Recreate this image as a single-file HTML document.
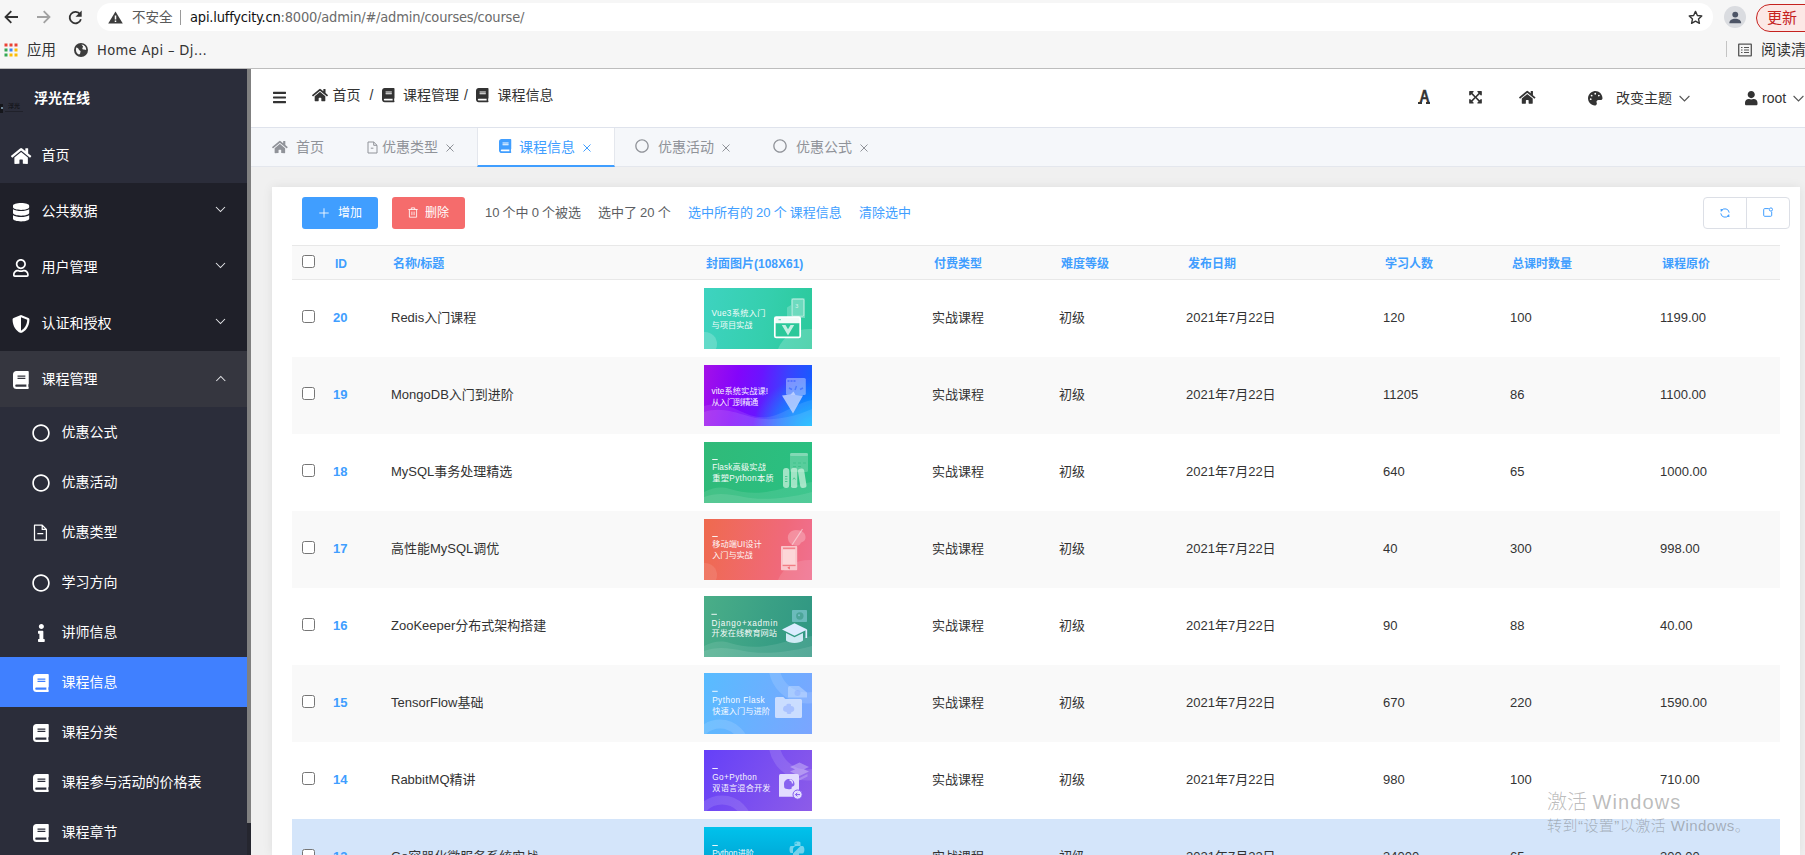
<!DOCTYPE html>
<html lang="zh-CN">
<head>
<meta charset="utf-8">
<title>浮光在线</title>
<style>
*{box-sizing:border-box;margin:0;padding:0}
html,body{width:1805px;height:855px;overflow:hidden;background:#f0f0f0}
body{font-family:"Liberation Sans","Noto Sans CJK SC",sans-serif;font-size:14px;color:#333;position:relative}
svg{display:block;overflow:visible}
.abs{position:absolute}
i,em,u,b,a{font-style:normal;text-decoration:none}
/* ---------- browser chrome ---------- */
#chrome{position:absolute;left:0;top:0;width:1805px;height:69px;background:#f6f6f6;border-bottom:1px solid #bdbdbd;font-family:"DejaVu Sans","Noto Sans CJK SC",sans-serif;color:#333}
#omni{position:absolute;left:97px;top:3px;width:1616px;height:28px;border-radius:14px;background:#fff}
#chrome span{position:absolute;white-space:nowrap}
/* ---------- sidebar ---------- */
#side{position:absolute;left:0;top:69px;width:247px;height:786px;background:#2b2d3a;color:#fff;overflow:hidden}
#sbar{position:absolute;left:247px;top:69px;width:4px;height:786px;background:#25262f}
#sbar i{position:absolute;left:0;top:0;width:4px;height:754px;background:#808080}
.logo{position:absolute;left:0;top:0;width:247px;height:58px}
.logo b{position:absolute;left:34px;top:19px;line-height:20px;font-size:14px;font-weight:700}
.logo em{position:absolute;left:8px;top:33.300px;font-size:6px;line-height:8px;color:#16171d;font-weight:700}
.logo i{position:absolute;display:block}
.mi{position:absolute;left:0;width:247px;height:56px;line-height:56px;font-size:14px}
.mi.dk{background:#1f2029}
.mi.op{background:#35363f}
.mi span{position:absolute;left:41.500px;top:0;white-space:nowrap}
.mi svg.ic{position:absolute}
.mi svg.ar{position:absolute;left:215px;top:22.200px}
.si{position:absolute;left:0;width:247px;height:50px;line-height:50px;font-size:14px}
.si span{position:absolute;left:61.500px;top:0;white-space:nowrap}
.si svg{position:absolute}
.si.act{background:#4080ff}
/* ---------- header ---------- */
#head{position:absolute;left:251px;top:69px;width:1554px;height:59px;background:#fff;border-bottom:1px solid #dfe3ec}
.bc{position:absolute;top:16px;line-height:20px;font-size:14px;color:#333;white-space:nowrap}
.hr{position:absolute;top:19px;line-height:20px;font-size:14px;color:#333;white-space:nowrap}
.fa-a{position:absolute;left:1166.500px;top:16.800px;width:13px;text-align:center;font-family:"Liberation Sans",sans-serif;font-weight:700;font-size:16px;line-height:22px;color:#333;transform:scaleX(.87);transform-origin:50% 50%;-webkit-text-stroke:.350px #333}
.fa-f{position:absolute;top:33.200px;height:1.700px;background:#333;border-radius:.3px}
#tabs{position:absolute;left:251px;top:128px;width:1554px;height:39px;background:#f5f7fa;border-bottom:1px solid #e4e7ed}
.tab{position:absolute;top:0;height:39px;line-height:38px;color:#909399;font-size:14px;white-space:nowrap}
.tabact{position:absolute;left:226px;top:0;width:138px;height:39px;background:#fff;border-left:1px solid #e4e7ed;border-right:1px solid #e4e7ed;border-bottom:2px solid #409eff}
#main{position:absolute;left:251px;top:167px;width:1554px;height:688px;background:#f0f0f0}
#card{position:absolute;left:272px;top:187px;width:1528px;height:668px;background:#fff;overflow:hidden;box-shadow:0 0 10px rgba(0,0,0,.08)}
.btn{position:absolute;top:10px;height:32px;border-radius:3px;color:#fff;font-size:12px;line-height:32px}
.btn svg{position:absolute}
.btn span{position:absolute;top:0;white-space:nowrap}
.btn.add{left:30px;width:76px;background:#409eff}
.btn.add svg{left:17px;top:11px}
.btn.add span{left:36px}
.btn.del{left:120px;width:73px;background:#f56c6c}
.btn.del svg{left:16.200px;top:9.700px}
.btn.del span{left:33px}
.tt{position:absolute;top:16px;line-height:20px;font-size:13px;color:#5c5e62;white-space:nowrap;word-spacing:-0.500px}
.tt.bl{color:#409eff}
.bg2{position:absolute;left:1431px;top:10px;width:87px;height:32px;border:1px solid #dcdfe6;border-radius:4px;background:#fff}
.bg2 i{position:absolute;left:42px;top:0;width:1px;height:30px;background:#dcdfe6}
.th{position:absolute;left:20px;top:58px;width:1488px;height:35px;background:#f9f9f9;border-top:1px solid #e8e8e8;border-bottom:1px solid #e8e8e8}
.th b{position:absolute;top:8px;line-height:20px;font-size:12px;font-weight:700;color:#409eff;white-space:nowrap}
.cb{position:absolute;width:13px;height:13px;border:1px solid #767676;border-radius:2.5px;background:#fff}
.tr{position:absolute;left:20px;width:1488px;height:77px;background:#fff;font-size:13px}
.tr.odd{background:#f9f9f9}
.tr.sel{background:#d4e5fa}
.tr span{position:absolute;top:28px;line-height:20px;white-space:nowrap;color:#333}
.tr a{position:absolute;top:28px;line-height:20px;font-weight:700;color:#409eff}
.tm{position:absolute;left:412px;top:8px;width:108px;height:61px;overflow:hidden}
.tm p{position:absolute;left:8px;top:21px;font-size:8px;line-height:11px;color:#fff;white-space:nowrap;opacity:.92}
.tm u{position:absolute;left:8px;top:17px;width:4px;height:1px;background:#fff;opacity:.9}
.tm svg{position:absolute;left:0;top:0}
.t1{background:linear-gradient(100deg,#3ed3c0,#35cfae 55%,#2bc99b)}
.t2{background:radial-gradient(ellipse 55% 85% at 100% 105%,rgba(0,185,255,1) 0%,rgba(0,185,255,0) 100%),linear-gradient(100deg,#a411e8 0%,#8305fb 30%,#6a14ff 50%,#3a42ff 72%,#0d63ff 100%)}
.t3{background:linear-gradient(100deg,#30ba79,#29c082)}
.t4{background:linear-gradient(100deg,#ef6a4e,#f0697a 70%,#f07090)}
.t5{background:linear-gradient(105deg,#4aae88,#3aa085 55%,#2f9682)}
.t6{background:linear-gradient(110deg,#58bcff,#7ba5ff)}
.t7{background:linear-gradient(120deg,#6540f8,#8d5ce8)}
.t8{background:linear-gradient(180deg,#00c2ec,#0092c4)}
#wm{position:absolute;left:1547px;top:788px;color:rgba(105,105,105,.45);white-space:nowrap;font-weight:300}
#wm .w1{font-size:20px;line-height:28px}
#wm .w1 em{letter-spacing:1.100px}
#wm .w2{font-size:15px;line-height:20px;margin-top:0;letter-spacing:.460px}
</style>
</head>
<body>
<div id="chrome"><div id="omni"></div>
<svg class="abs" style="left:4px;top:9.5px" width="15" height="14" viewBox="0 0 15 14"><path d="M14 7H1.5M7.300 1.200L1.500 7l5.800 5.800" fill="none" stroke="#333" stroke-width="1.800"/></svg>
<svg class="abs" style="left:36px;top:9.5px" width="15" height="14" viewBox="0 0 15 14"><path d="M1 7h12.500M7.700 1.200L13.500 7l-5.800 5.800" fill="none" stroke="#a2a2a2" stroke-width="1.800"/></svg>
<svg class="abs" style="left:68px;top:9.500px" width="15" height="15" viewBox="0 0 15 15"><path d="M12.100 4.300A5.700 5.700 0 1 0 12.900 9.200" fill="none" stroke="#333" stroke-width="1.800"/><path d="M13.700 0.500v6.200H7.500z" fill="#333"/></svg>
<svg class="abs" style="left:107.500px;top:11.300px" width="15" height="13" viewBox="0 0 14 12"><path d="M7 0.300L13.800 11.500H0.200z" fill="#3c3c3c"/><path d="M6.300 4.200h1.400v3.700H6.300zM6.300 8.800h1.400v1.400H6.300z" fill="#fff"/></svg>
<span style="left:132px;top:7px;font-size:13.500px;line-height:20px;color:#5a5a5a">不安全</span>
<i class="abs" style="left:180px;top:10px;width:1px;height:15px;background:#9a9a9a"></i>
<span style="left:190px;top:6.700px;font-size:14.500px;font-stretch:condensed;line-height:20px;color:#111;letter-spacing:-0.200px">api.luffycity.cn<em style="color:#6b6b6b">:8000/admin/#/admin/courses/course/</em></span>
<svg class="abs" style="left:1687.500px;top:9.500px" width="15" height="15" viewBox="0 0 14 14"><path d="M7 1.300l1.750 3.800 4.100.45-3.050 2.800.85 4.050L7 10.350 3.350 12.400l.85-4.050L1.150 5.550l4.100-.45z" fill="none" stroke="#333" stroke-width="1.300" stroke-linejoin="round"/></svg>
<i class="abs" style="left:1724px;top:6px;width:22px;height:22px;border-radius:11px;background:#dadce0"></i>
<svg class="abs" style="left:1728.800px;top:10.800px" width="12.500" height="13" viewBox="0 0 12 12"><circle cx="6" cy="3.200" r="2.800" fill="#4d5566"/><path d="M0.300 11.500c0-3 2.600-4.400 5.700-4.400s5.700 1.400 5.700 4.400z" fill="#4d5566"/></svg>
<div class="abs" style="left:1756px;top:3.500px;width:70px;height:28px;border:1px solid #c5221f;border-radius:14px;background:#fce8e6"></div>
<span style="left:1767px;top:7.200px;font-size:15px;line-height:22px;color:#c5221f">更新</span>
<!-- bookmarks bar -->
<svg class="abs" style="left:4px;top:43px" width="14" height="14" viewBox="0 0 14 14"><g><rect x="0.500" y="0.500" width="3" height="3" fill="#ea4335"/><rect x="5.500" y="0.500" width="3" height="3" fill="#ea4335"/><rect x="10.500" y="0.500" width="3" height="3" fill="#ea4335"/><rect x="0.500" y="5.500" width="3" height="3" fill="#34a853"/><rect x="5.500" y="5.500" width="3" height="3" fill="#4285f4"/><rect x="10.500" y="5.500" width="3" height="3" fill="#fbbc04"/><rect x="0.500" y="10.500" width="3" height="3" fill="#34a853"/><rect x="5.500" y="10.500" width="3" height="3" fill="#fbbc04"/><rect x="10.500" y="10.500" width="3" height="3" fill="#fbbc04"/></g></svg>
<span style="left:27px;top:39px;font-size:14.400px;line-height:22px;color:#333">应用</span>
<svg class="abs" style="left:74px;top:43px" width="14" height="14" viewBox="0 0 14 14"><circle cx="7" cy="7" r="7" fill="#3c3c3c"/><path d="M2.200 4.500c1.500.2 2.300 1 2.600 2 .3 1 1.400.8 1.700 1.700.3 1-.6 1.600-.4 2.700l-1.300.6C2.600 10.400 1.300 8 2.200 4.500zM7.500 1.600c.2 1 1.300 1.100 1.500 2 .2.900-1 1.400-.6 2.300.5 1 2.400.4 3.700 1.200.4-2.600-1.600-5.300-4.600-5.500z" fill="#f6f6f6"/></svg>
<span style="left:97px;top:39px;font-size:14.500px;font-stretch:condensed;line-height:22px;color:#333;letter-spacing:0.360px">Home Api – Dj…</span>
<i class="abs" style="left:1726px;top:41px;width:1px;height:16px;background:#c4c4c4"></i>
<svg class="abs" style="left:1738px;top:43px" width="14" height="14" viewBox="0 0 14 13"><rect x="0.700" y="0.700" width="12.600" height="11.600" rx="0.300" fill="none" stroke="#555" stroke-width="1.300"/><path d="M3 4h1.500M6 4h5M3 6.500h1.500M6 6.500h5M3 9h1.500M6 9h5" stroke="#555" stroke-width="1.200"/></svg>
<span style="left:1761px;top:39px;font-size:15px;line-height:22px;color:#333">阅读清单</span>
</div>
<div id="side">
<div class="logo"><i style="left:0;top:34.500px;width:3.300px;height:9px;background:#15161b"></i><i style="left:.8px;top:37.500px;width:2px;height:2.300px;background:#6f8798"></i><i style="left:5px;top:41.800px;width:18px;height:1px;background:#20212a"></i><em>浮光</em><b>浮光在线</b></div>
<div class="mi " style="top:58px"><svg class="ic" style="left:10.88px;top:20.20px" width="20.25" height="18" viewBox="0 0 576 512" preserveAspectRatio="xMidYMid meet"><path fill="#fff" d="M280.37 148.26L96 300.11V464a16 16 0 0 0 16 16l112.06-.29a16 16 0 0 0 15.92-16V368a16 16 0 0 1 16-16h64a16 16 0 0 1 16 16v95.64a16 16 0 0 0 16 16.05L464 480a16 16 0 0 0 16-16V300L295.67 148.26a12.19 12.19 0 0 0-15.3 0zM571.6 251.47L488 182.56V44.05a12 12 0 0 0-12-12h-56a12 12 0 0 0-12 12v72.61L318.47 43a48 48 0 0 0-61 0L4.34 251.47a12 12 0 0 0-1.6 16.9l25.5 31A12 12 0 0 0 45.15 301l235.22-193.74a12.19 12.19 0 0 1 15.3 0L530.9 301a12 12 0 0 0 16.9-1.6l25.5-31a12 12 0 0 0-1.7-16.93z"/></svg><span>首页</span></div>
<div class="mi dk" style="top:114px"><svg class="ic" style="left:12.90px;top:19.95px" width="16.2" height="18.5" viewBox="0 0 448 512" preserveAspectRatio="xMidYMid meet"><path fill="#fff" d="M448 73.143v45.714C448 159.143 347.667 192 224 192S0 159.143 0 118.857V73.143C0 32.857 100.333 0 224 0s224 32.857 224 73.143zM448 176v102.857C448 319.143 347.667 352 224 352S0 319.143 0 278.857V176c48.125 33.143 136.208 48.572 224 48.572S399.874 209.143 448 176zm0 160v102.857C448 479.143 347.667 512 224 512S0 479.143 0 438.857V336c48.125 33.143 136.208 48.572 224 48.572S399.874 369.143 448 336z"/></svg><span>公共数据</span><svg class="ar" width="11" height="9" viewBox="0 0 11 9"><path d="M1 2 L5.500 6.500 L10 2" fill="none" stroke="#e6e7ea" stroke-width="1.050"/></svg></div>
<div class="mi dk" style="top:170px"><svg class="ic" style="left:13.12px;top:20.20px" width="15.75" height="18" viewBox="0 0 448 512" preserveAspectRatio="xMidYMid meet"><path fill="#fff" d="M313.6 304c-28.7 0-42.5 16-89.6 16-47.1 0-60.8-16-89.6-16C60.2 304 0 364.2 0 438.4V464c0 26.5 21.5 48 48 48h352c26.5 0 48-21.5 48-48v-25.6c0-74.2-60.2-134.4-134.4-134.4zM400 464H48v-25.6c0-47.6 38.800-86.400 86.400-86.400 14.600 0 38.300 16 89.600 16 51.700 0 74.900-16 89.600-16 47.600 0 86.400 38.800 86.400 86.400V464zM224 288c79.500 0 144-64.500 144-144S303.500 0 224 0 80 64.500 80 144s64.500 144 144 144zm0-240c52.900 0 96 43.100 96 96s-43.100 96-96 96-96-43.100-96-96 43.100-96 96-96z"/></svg><span>用户管理</span><svg class="ar" width="11" height="9" viewBox="0 0 11 9"><path d="M1 2 L5.500 6.500 L10 2" fill="none" stroke="#e6e7ea" stroke-width="1.050"/></svg></div>
<div class="mi dk" style="top:226px"><svg class="ic" style="left:12.00px;top:20.20px" width="18" height="18" viewBox="0 0 512 512" preserveAspectRatio="xMidYMid meet"><path fill="#fff" d="M466.5 83.7l-192-80a48.150 48.150 0 0 0-36.900 0l-192 80C27.700 91.100 16 108.600 16 128c0 198.500 114.500 335.700 221.500 380.300 11.800 4.900 25.100 4.900 36.900 0C360.100 472.600 496 349.300 496 128c0-19.400-11.700-36.900-29.500-44.300zM256.100 446.300l-.1-381 175.900 73.300c-3.300 151.400-82.100 261.100-175.800 307.700z"/></svg><span>认证和授权</span><svg class="ar" width="11" height="9" viewBox="0 0 11 9"><path d="M1 2 L5.500 6.500 L10 2" fill="none" stroke="#e6e7ea" stroke-width="1.050"/></svg></div>
<div class="mi op" style="top:282px"><svg class="ic" style="left:13.12px;top:20.20px" width="15.75" height="18" viewBox="0 0 448 512" preserveAspectRatio="xMidYMid meet"><path fill="#fff" d="M448 360V24c0-13.300-10.700-24-24-24H96C43 0 0 43 0 96v320c0 53 43 96 96 96h328c13.300 0 24-10.700 24-24v-16c0-7.500-3.500-14.300-8.900-18.700-4.200-15.400-4.200-59.300 0-74.700 5.400-4.300 8.900-11.100 8.900-18.600zM128 134c0-3.300 2.700-6 6-6h212c3.300 0 6 2.700 6 6v20c0 3.300-2.700 6-6 6H134c-3.300 0-6-2.700-6-6v-20zm0 64c0-3.300 2.700-6 6-6h212c3.300 0 6 2.700 6 6v20c0 3.300-2.700 6-6 6H134c-3.300 0-6-2.700-6-6v-20zm253.400 250H96c-17.700 0-32-14.300-32-32 0-17.600 14.400-32 32-32h285.400c-1.900 17.100-1.900 46.900 0 64z"/></svg><span>课程管理</span><svg class="ar" width="11" height="9" viewBox="0 0 11 9"><path d="M1.3 8 L5.8 3.500 L10.300 8" fill="none" stroke="#e6e7ea" stroke-width="1.050"/></svg></div>
<div class="si" style="top:338px"><svg class="ic" style="left:32.00px;top:16.50px" width="18" height="18" viewBox="0 0 512 512" preserveAspectRatio="xMidYMid meet"><path fill="#fff" d="M256 8C119 8 8 119 8 256s111 248 248 248 248-111 248-248S393 8 256 8zm0 448c-110.500 0-200-89.500-200-200S145.500 56 256 56s200 89.500 200 200-89.500 200-200 200z"/></svg><span>优惠公式</span></div>
<div class="si" style="top:388px"><svg class="ic" style="left:32.00px;top:16.50px" width="18" height="18" viewBox="0 0 512 512" preserveAspectRatio="xMidYMid meet"><path fill="#fff" d="M256 8C119 8 8 119 8 256s111 248 248 248 248-111 248-248S393 8 256 8zm0 448c-110.500 0-200-89.500-200-200S145.500 56 256 56s200 89.500 200 200-89.500 200-200 200z"/></svg><span>优惠活动</span></div>
<div class="si" style="top:438px"><svg class="ic" style="left:33px;top:16.5px" width="15" height="17" viewBox="0 0 15 17"><path d="M1.500 1.200h7.700l4.200 4.200v10.700H1.500z M9.200 1.200v4.200h4.200 M4.300 9.500h6" fill="none" stroke="#fff" stroke-width="1.250" stroke-linejoin="round"/></svg><span>优惠类型</span></div>
<div class="si" style="top:488px"><svg class="ic" style="left:32.00px;top:16.50px" width="18" height="18" viewBox="0 0 512 512" preserveAspectRatio="xMidYMid meet"><path fill="#fff" d="M256 8C119 8 8 119 8 256s111 248 248 248 248-111 248-248S393 8 256 8zm0 448c-110.500 0-200-89.500-200-200S145.500 56 256 56s200 89.500 200 200-89.500 200-200 200z"/></svg><span>学习方向</span></div>
<div class="si" style="top:538px"><svg class="ic" style="left:37.62px;top:16.50px" width="6.75" height="18" viewBox="0 0 192 512" preserveAspectRatio="xMidYMid meet"><path fill="#fff" d="M20 424.229h20V279.771H20c-11.046 0-20-8.954-20-20V212c0-11.046 8.954-20 20-20h112c11.046 0 20 8.954 20 20v212.229h20c11.046 0 20 8.954 20 20V492c0 11.046-8.954 20-20 20H20c-11.046 0-20-8.954-20-20v-47.771c0-11.046 8.954-20 20-20zM96 0C56.235 0 24 32.235 24 72s32.235 72 72 72 72-32.235 72-72S135.764 0 96 0z"/></svg><span>讲师信息</span></div>
<div class="si act" style="top:588px"><svg class="ic" style="left:33.12px;top:16.50px" width="15.75" height="18" viewBox="0 0 448 512" preserveAspectRatio="xMidYMid meet"><path fill="#fff" d="M448 360V24c0-13.300-10.700-24-24-24H96C43 0 0 43 0 96v320c0 53 43 96 96 96h328c13.300 0 24-10.700 24-24v-16c0-7.500-3.500-14.300-8.900-18.700-4.200-15.400-4.200-59.300 0-74.700 5.400-4.300 8.900-11.100 8.900-18.600zM128 134c0-3.300 2.700-6 6-6h212c3.300 0 6 2.700 6 6v20c0 3.300-2.700 6-6 6H134c-3.300 0-6-2.700-6-6v-20zm0 64c0-3.300 2.700-6 6-6h212c3.300 0 6 2.700 6 6v20c0 3.300-2.700 6-6 6H134c-3.300 0-6-2.700-6-6v-20zm253.400 250H96c-17.700 0-32-14.300-32-32 0-17.600 14.400-32 32-32h285.400c-1.900 17.100-1.900 46.900 0 64z"/></svg><span>课程信息</span></div>
<div class="si" style="top:638px"><svg class="ic" style="left:33.12px;top:16.50px" width="15.75" height="18" viewBox="0 0 448 512" preserveAspectRatio="xMidYMid meet"><path fill="#fff" d="M448 360V24c0-13.300-10.700-24-24-24H96C43 0 0 43 0 96v320c0 53 43 96 96 96h328c13.300 0 24-10.700 24-24v-16c0-7.500-3.500-14.300-8.900-18.700-4.200-15.400-4.200-59.300 0-74.700 5.400-4.300 8.900-11.100 8.900-18.600zM128 134c0-3.300 2.700-6 6-6h212c3.300 0 6 2.700 6 6v20c0 3.300-2.700 6-6 6H134c-3.300 0-6-2.700-6-6v-20zm0 64c0-3.300 2.700-6 6-6h212c3.300 0 6 2.700 6 6v20c0 3.300-2.700 6-6 6H134c-3.300 0-6-2.700-6-6v-20zm253.400 250H96c-17.700 0-32-14.300-32-32 0-17.600 14.400-32 32-32h285.400c-1.900 17.100-1.900 46.900 0 64z"/></svg><span>课程分类</span></div>
<div class="si" style="top:688px"><svg class="ic" style="left:33.12px;top:16.50px" width="15.75" height="18" viewBox="0 0 448 512" preserveAspectRatio="xMidYMid meet"><path fill="#fff" d="M448 360V24c0-13.300-10.700-24-24-24H96C43 0 0 43 0 96v320c0 53 43 96 96 96h328c13.300 0 24-10.700 24-24v-16c0-7.500-3.500-14.300-8.900-18.700-4.200-15.400-4.200-59.300 0-74.700 5.400-4.300 8.900-11.100 8.900-18.600zM128 134c0-3.300 2.700-6 6-6h212c3.300 0 6 2.700 6 6v20c0 3.300-2.700 6-6 6H134c-3.300 0-6-2.700-6-6v-20zm0 64c0-3.300 2.700-6 6-6h212c3.300 0 6 2.700 6 6v20c0 3.300-2.700 6-6 6H134c-3.300 0-6-2.700-6-6v-20zm253.400 250H96c-17.700 0-32-14.300-32-32 0-17.600 14.400-32 32-32h285.400c-1.900 17.100-1.900 46.900 0 64z"/></svg><span>课程参与活动的价格表</span></div>
<div class="si" style="top:738px"><svg class="ic" style="left:33.12px;top:16.50px" width="15.75" height="18" viewBox="0 0 448 512" preserveAspectRatio="xMidYMid meet"><path fill="#fff" d="M448 360V24c0-13.300-10.700-24-24-24H96C43 0 0 43 0 96v320c0 53 43 96 96 96h328c13.300 0 24-10.700 24-24v-16c0-7.500-3.500-14.300-8.900-18.700-4.200-15.400-4.200-59.300 0-74.700 5.400-4.300 8.900-11.100 8.900-18.600zM128 134c0-3.300 2.700-6 6-6h212c3.300 0 6 2.700 6 6v20c0 3.300-2.700 6-6 6H134c-3.300 0-6-2.700-6-6v-20zm0 64c0-3.300 2.700-6 6-6h212c3.300 0 6 2.700 6 6v20c0 3.300-2.700 6-6 6H134c-3.300 0-6-2.700-6-6v-20zm253.400 250H96c-17.700 0-32-14.300-32-32 0-17.600 14.400-32 32-32h285.400c-1.900 17.100-1.900 46.900 0 64z"/></svg><span>课程章节</span></div>
</div>
<div id="sbar"><i></i></div>
<div id="head">
<svg class="abs" style="left:22px;top:20.700px" width="13" height="15" viewBox="0 0 448 512" preserveAspectRatio="xMidYMid meet"><path fill="#333" d="M16 132h416c8.837 0 16-7.163 16-16V76c0-8.837-7.163-16-16-16H16C7.163 60 0 67.163 0 76v40c0 8.837 7.163 16 16 16zm0 160h416c8.837 0 16-7.163 16-16v-40c0-8.837-7.163-16-16-16H16c-8.837 0-16 7.163-16 16v40c0 8.837 7.163 16 16 16zm0 160h416c8.837 0 16-7.163 16-16v-40c0-8.837-7.163-16-16-16H16c-8.837 0-16 7.163-16 16v40c0 8.837 7.163 16 16 16z"/></svg><svg class="abs" style="left:60.5px;top:18.5px" width="16" height="14.2" viewBox="0 0 576 512" preserveAspectRatio="xMidYMid meet"><path fill="#333" d="M280.37 148.26L96 300.11V464a16 16 0 0 0 16 16l112.06-.29a16 16 0 0 0 15.92-16V368a16 16 0 0 1 16-16h64a16 16 0 0 1 16 16v95.64a16 16 0 0 0 16 16.05L464 480a16 16 0 0 0 16-16V300L295.67 148.26a12.19 12.19 0 0 0-15.3 0zM571.6 251.47L488 182.56V44.05a12 12 0 0 0-12-12h-56a12 12 0 0 0-12 12v72.61L318.47 43a48 48 0 0 0-61 0L4.34 251.47a12 12 0 0 0-1.6 16.9l25.5 31A12 12 0 0 0 45.15 301l235.22-193.74a12.19 12.19 0 0 1 15.3 0L530.9 301a12 12 0 0 0 16.9-1.6l25.5-31a12 12 0 0 0-1.7-16.93z"/></svg><span class="bc" style="left:81.500px">首页</span><span class="bc" style="left:118.500px">/</span><svg class="abs" style="left:130.5px;top:18.6px" width="12.5" height="14.3" viewBox="0 0 448 512" preserveAspectRatio="xMidYMid meet"><path fill="#333" d="M448 360V24c0-13.300-10.700-24-24-24H96C43 0 0 43 0 96v320c0 53 43 96 96 96h328c13.300 0 24-10.700 24-24v-16c0-7.500-3.500-14.300-8.900-18.700-4.200-15.400-4.200-59.300 0-74.700 5.400-4.300 8.900-11.100 8.900-18.600zM128 134c0-3.300 2.700-6 6-6h212c3.300 0 6 2.700 6 6v20c0 3.300-2.700 6-6 6H134c-3.300 0-6-2.700-6-6v-20zm0 64c0-3.300 2.700-6 6-6h212c3.300 0 6 2.700 6 6v20c0 3.300-2.700 6-6 6H134c-3.300 0-6-2.700-6-6v-20zm253.400 250H96c-17.700 0-32-14.300-32-32 0-17.600 14.400-32 32-32h285.400c-1.900 17.100-1.900 46.900 0 64z"/></svg><span class="bc" style="left:152px">课程管理</span><span class="bc" style="left:213px">/</span><svg class="abs" style="left:225.3px;top:18.6px" width="12.5" height="14.3" viewBox="0 0 448 512" preserveAspectRatio="xMidYMid meet"><path fill="#333" d="M448 360V24c0-13.300-10.700-24-24-24H96C43 0 0 43 0 96v320c0 53 43 96 96 96h328c13.300 0 24-10.700 24-24v-16c0-7.500-3.500-14.300-8.900-18.700-4.200-15.400-4.200-59.300 0-74.700 5.400-4.300 8.900-11.100 8.900-18.600zM128 134c0-3.300 2.700-6 6-6h212c3.300 0 6 2.700 6 6v20c0 3.300-2.700 6-6 6H134c-3.300 0-6-2.700-6-6v-20zm0 64c0-3.300 2.700-6 6-6h212c3.300 0 6 2.700 6 6v20c0 3.300-2.700 6-6 6H134c-3.300 0-6-2.700-6-6v-20zm253.400 250H96c-17.700 0-32-14.300-32-32 0-17.600 14.400-32 32-32h285.400c-1.900 17.100-1.900 46.900 0 64z"/></svg><span class="bc" style="left:246.5px">课程信息</span>
<span class="fa-a">A</span><i class="fa-f" style="left:1166.900px;width:4.600px"></i><i class="fa-f" style="left:1174.800px;width:4.600px"></i><svg class="abs" style="left:1217.5px;top:20.900px" width="13" height="14.5" viewBox="0 0 448 512" preserveAspectRatio="xMidYMid meet"><path fill="#333" d="M448 344v112a23.940 23.940 0 0 1-24 24H312c-21.390 0-32.090-25.900-17-41l36.200-36.200L224 295.600 116.770 402.900 153 439c15.090 15.100 4.390 41-17 41H24a23.940 23.940 0 0 1-24-24V344c0-21.400 25.890-32.100 41-17l36.190 36.200L184.460 256 77.180 148.700 41 185c-15.100 15.100-41 4.400-41-17V56a23.940 23.940 0 0 1 24-24h112c21.390 0 32.090 25.900 17 41l-36.200 36.200L224 216.400l107.230-107.300L295 73c-15.090-15.100-4.390-41 17-41h112a23.940 23.940 0 0 1 24 24v112c0 21.400-25.890 32.100-41 17l-36.190-36.200L263.540 256l107.280 107.300L407 327.100c15.100-15.200 41-4.500 41 16.900z"/></svg><svg class="abs" style="left:1267.8px;top:21.3px" width="16.5" height="14.6" viewBox="0 0 576 512" preserveAspectRatio="xMidYMid meet"><path fill="#333" d="M280.37 148.26L96 300.11V464a16 16 0 0 0 16 16l112.06-.29a16 16 0 0 0 15.92-16V368a16 16 0 0 1 16-16h64a16 16 0 0 1 16 16v95.64a16 16 0 0 0 16 16.05L464 480a16 16 0 0 0 16-16V300L295.67 148.26a12.19 12.19 0 0 0-15.3 0zM571.6 251.47L488 182.56V44.05a12 12 0 0 0-12-12h-56a12 12 0 0 0-12 12v72.61L318.47 43a48 48 0 0 0-61 0L4.34 251.47a12 12 0 0 0-1.6 16.9l25.5 31A12 12 0 0 0 45.15 301l235.22-193.74a12.19 12.19 0 0 1 15.3 0L530.9 301a12 12 0 0 0 16.9-1.6l25.5-31a12 12 0 0 0-1.7-16.93z"/></svg><svg class="abs" style="left:1336.5px;top:22px" width="14.5" height="14.5" viewBox="0 0 512 512" preserveAspectRatio="xMidYMid meet"><path fill="#333" d="M204.3 5C104.9 24.4 24.8 104.3 5.2 203.4c-37 187 131.700 326.400 258.800 306.700 41.200-6.400 61.400-54.600 42.500-91.700-23.100-45.400 9.900-98.400 60.900-98.400h79.700c35.800 0 64.800-29.600 64.900-65.300C511.500 97.100 368.100-26.900 204.300 5zM96 320c-17.700 0-32-14.300-32-32s14.300-32 32-32 32 14.300 32 32-14.300 32-32 32zm32-128c-17.700 0-32-14.300-32-32s14.300-32 32-32 32 14.300 32 32-14.300 32-32 32zm128-64c-17.700 0-32-14.300-32-32s14.300-32 32-32 32 14.300 32 32-14.300 32-32 32zm128 64c-17.700 0-32-14.300-32-32s14.300-32 32-32 32 14.300 32 32-14.300 32-32 32z"/></svg><span class="hr" style="left:1365px">改变主题</span><svg class="abs" style="left:1428px;top:25.5px" width="11" height="8" viewBox="0 0 11 8"><path d="M0.6 1 L5.5 6 L10.4 1" fill="none" stroke="#555" stroke-width="1.1"/></svg><svg class="abs" style="left:1494px;top:22px" width="12.5" height="14.3" viewBox="0 0 448 512" preserveAspectRatio="xMidYMid meet"><path fill="#333" d="M224 256c70.700 0 128-57.300 128-128S294.700 0 224 0 96 57.300 96 128s57.300 128 128 128zm89.600 32h-16.700c-22.200 10.200-46.900 16-72.900 16s-50.600-5.800-72.900-16h-16.700C60.200 288 0 348.200 0 422.400V464c0 26.500 21.500 48 48 48h352c26.500 0 48-21.500 48-48v-41.600c0-74.200-60.200-134.400-134.400-134.400z"/></svg><span class="hr" style="left:1511px">root</span><svg class="abs" style="left:1542px;top:25.5px" width="11" height="8" viewBox="0 0 11 8"><path d="M0.6 1 L5.5 6 L10.4 1" fill="none" stroke="#555" stroke-width="1.1"/></svg></div>
<div id="tabs">
<div class="tabact"></div><svg class="abs" style="left:20.5px;top:12px" width="15.75" height="14" viewBox="0 0 576 512" preserveAspectRatio="xMidYMid meet"><path fill="#909399" d="M280.37 148.26L96 300.11V464a16 16 0 0 0 16 16l112.06-.29a16 16 0 0 0 15.92-16V368a16 16 0 0 1 16-16h64a16 16 0 0 1 16 16v95.64a16 16 0 0 0 16 16.05L464 480a16 16 0 0 0 16-16V300L295.67 148.26a12.19 12.19 0 0 0-15.3 0zM571.6 251.47L488 182.56V44.05a12 12 0 0 0-12-12h-56a12 12 0 0 0-12 12v72.61L318.47 43a48 48 0 0 0-61 0L4.34 251.47a12 12 0 0 0-1.6 16.9l25.5 31A12 12 0 0 0 45.15 301l235.22-193.74a12.19 12.19 0 0 1 15.3 0L530.9 301a12 12 0 0 0 16.9-1.6l25.5-31a12 12 0 0 0-1.7-16.93z"/></svg><span class="tab" style="left:45px">首页</span><svg class="abs" style="left:115.5px;top:13px" width="11" height="13" viewBox="0 0 11 13"><path d="M1 1h5.7l3.3 3.3v7.7H1z M6.7 1v3.3h3.3 M3.8 7.2h2.6" fill="none" stroke="#909399" stroke-width="1" stroke-linejoin="round"/></svg><span class="tab" style="left:131px">优惠类型</span><svg class="abs" style="left:195px;top:15.5px" width="8" height="8" viewBox="0 0 8 8"><path d="M0.5 0.5L7.5 7.5M7.5 0.5L0.5 7.5" stroke="#909399" stroke-width="1" fill="none"/></svg><svg class="abs" style="left:247.5px;top:11.200px" width="12.25" height="14" viewBox="0 0 448 512" preserveAspectRatio="xMidYMid meet"><path fill="#409eff" d="M448 360V24c0-13.300-10.700-24-24-24H96C43 0 0 43 0 96v320c0 53 43 96 96 96h328c13.300 0 24-10.700 24-24v-16c0-7.500-3.500-14.300-8.900-18.700-4.200-15.400-4.200-59.300 0-74.700 5.400-4.300 8.900-11.100 8.900-18.600zM128 134c0-3.300 2.700-6 6-6h212c3.300 0 6 2.700 6 6v20c0 3.300-2.700 6-6 6H134c-3.300 0-6-2.700-6-6v-20zm0 64c0-3.300 2.700-6 6-6h212c3.300 0 6 2.700 6 6v20c0 3.300-2.700 6-6 6H134c-3.300 0-6-2.700-6-6v-20zm253.400 250H96c-17.700 0-32-14.300-32-32 0-17.600 14.400-32 32-32h285.400c-1.900 17.100-1.900 46.900 0 64z"/></svg><span class="tab" style="left:268px;color:#409eff">课程信息</span><svg class="abs" style="left:332px;top:15.5px" width="8" height="8" viewBox="0 0 8 8"><path d="M0.5 0.5L7.5 7.5M7.5 0.5L0.5 7.5" stroke="#409eff" stroke-width="1" fill="none"/></svg><svg class="abs" style="left:384px;top:11.300px" width="14" height="14" viewBox="0 0 512 512" preserveAspectRatio="xMidYMid meet"><path fill="#909399" d="M256 8C119 8 8 119 8 256s111 248 248 248 248-111 248-248S393 8 256 8zm0 448c-110.500 0-200-89.500-200-200S145.500 56 256 56s200 89.500 200 200-89.500 200-200 200z"/></svg><span class="tab" style="left:407px">优惠活动</span><svg class="abs" style="left:471px;top:15.5px" width="8" height="8" viewBox="0 0 8 8"><path d="M0.5 0.5L7.5 7.5M7.5 0.5L0.5 7.5" stroke="#909399" stroke-width="1" fill="none"/></svg><svg class="abs" style="left:522.200px;top:11.300px" width="14" height="14" viewBox="0 0 512 512" preserveAspectRatio="xMidYMid meet"><path fill="#909399" d="M256 8C119 8 8 119 8 256s111 248 248 248 248-111 248-248S393 8 256 8zm0 448c-110.500 0-200-89.500-200-200S145.500 56 256 56s200 89.500 200 200-89.500 200-200 200z"/></svg><span class="tab" style="left:545px">优惠公式</span><svg class="abs" style="left:609px;top:15.5px" width="8" height="8" viewBox="0 0 8 8"><path d="M0.5 0.5L7.5 7.5M7.5 0.5L0.5 7.5" stroke="#909399" stroke-width="1" fill="none"/></svg></div>
<div id="main"></div>
<div id="card">
<div class="btn add"><svg width="10" height="10" viewBox="0 0 10 10"><path d="M5 0.300v9.400M0.300 5h9.400" stroke="#fff" stroke-width="0.900" fill="none" opacity=".95"/></svg><span>增加</span></div><div class="btn del"><svg width="10" height="11" viewBox="0 0 10 11"><path d="M0.300 2.500h9.400 M3.300 2.500V0.900h3.400v1.600 M1.400 2.500v7.700h7.200V2.500 M3.900 4.600v3.600 M6.100 4.600v3.600" stroke="#fff" stroke-width="0.900" fill="none" opacity=".92"/></svg><span>删除</span></div><span class="tt" style="left:213px">10 个中 0 个被选</span><span class="tt" style="left:326px">选中了 20 个</span><span class="tt bl" style="left:416px">选中所有的 20 个 课程信息</span><span class="tt bl" style="left:587px">清除选中</span><div class="bg2"><i></i><svg class="abs" style="left:15.100px;top:8.800px" width="12" height="12" viewBox="0 0 12 12"><path d="M2.560 3.590A4.200 4.200 0 0 1 10.180 5.630M9.440 8.410A4.200 4.200 0 0 1 1.820 6.370" fill="none" stroke="#409eff" stroke-width="1"/><path d="M1.500 1.900L4.400 2.300 1.900 5zM10.500 10.100L7.600 9.700 10.100 7z" fill="#409eff"/></svg><svg class="abs" style="left:58px;top:8px" width="12" height="12" viewBox="0 0 12 12"><path d="M6.800 2.600H2.700a1 1 0 0 0-1 1V9.300a1 1 0 0 0 1 1H8.700a1 1 0 0 0 1-1V5.600" fill="none" stroke="#409eff" stroke-width="1"/><circle cx="8.900" cy="3.500" r="1.600" fill="none" stroke="#409eff" stroke-width="1"/></svg></div>
<div class="th"><i class="cb" style="left:10px;top:8.500px"></i><b style="left:43px">ID</b><b style="left:101px">名称/标题</b><b style="left:414px">封面图片(108X61)</b><b style="left:642px">付费类型</b><b style="left:769px">难度等级</b><b style="left:896px">发布日期</b><b style="left:1093px">学习人数</b><b style="left:1220px">总课时数量</b><b style="left:1370px">课程原价</b></div>
<div class="tr" style="top:93px"><i class="cb" style="left:10px;top:30px"></i><a style="left:41px">20</a><span style="left:99px">Redis入门课程</span><div class="tm t1"><svg width="108" height="61" viewBox="0 0 108 61"><circle cx="1" cy="56" r="12" fill="#fff" opacity=".2"/><path d="M74 61C79 47 94 40 108 41V61z" fill="#fff" opacity=".2"/><path d="M83 30V19.500l4-2.500V30z" fill="#fff" opacity=".22"/><path d="M87 11.500a1.500 1.500 0 0 1 1.500-1.500h11a1.500 1.500 0 0 1 1.500 1.500V30H87z" fill="#fff" opacity=".3"/><rect x="88.200" y="11.200" width="11.600" height="17" rx="1" fill="none" stroke="#fff" stroke-width=".8" opacity=".6"/><text x="91.300" y="20.300" font-size="5.500" fill="#fff" opacity=".7" font-family="Liberation Sans,sans-serif">3</text><rect x="70.800" y="29" width="25.400" height="20.400" rx="1.500" fill="#2bc89a" stroke="#fff" stroke-width="1.700"/><rect x="70.800" y="29" width="25.400" height="6.200" rx="1" fill="#fff" opacity=".93"/><rect x="74.500" y="31.200" width="2.500" height="1" fill="#2bc89a" opacity=".7"/><path d="M77.800 37h3.700l2.500 4.300 2.500-4.300h3.700L84 47.500z" fill="#fff" opacity=".72"/><text x="7.5" y="28.3" font-size="8.2" textLength="54" lengthAdjust="spacing" fill="#fff" opacity=".95">Vue3系统入门</text><text x="7.5" y="39.8" font-size="8.2" textLength="41" lengthAdjust="spacing" fill="#fff" opacity=".95">与项目实战</text></svg></div><span style="left:640px">实战课程</span><span style="left:767px">初级</span><span style="left:894px">2021年7月22日</span><span style="left:1091px">120</span><span style="left:1218px">100</span><span style="left:1368px">1199.00</span></div>
<div class="tr odd" style="top:170px"><i class="cb" style="left:10px;top:30px"></i><a style="left:41px">19</a><span style="left:99px">MongoDB入门到进阶</span><div class="tm t2"><svg width="108" height="61" viewBox="0 0 108 61"><path d="M0 41C10 38 22 39 34 45S58 55 72 50 96 37 108 35V61H0z" fill="#fff" opacity=".1"/><path d="M0 47C14 42 28 46 44 51S80 56 108 44V61H0z" fill="#fff" opacity=".1"/><rect x="82" y="13" width="19.800" height="17" rx="1.500" fill="#bcd0ff" opacity=".55"/><path d="M83.500 15.300h2v1.400h-2zM86.500 15.300h2v1.400h-2zM89.500 15.300h2v1.400h-2z" fill="#2f59ff" opacity=".7"/><path d="M85 23l3 1.500M99 23l-3 1.500M92.500 21l-1.500 4" stroke="#3a6aff" stroke-width="1.400" opacity=".7" fill="none"/><path d="M78 30.500l8.500-1 3-3 2 3.500 7.500.500L89 48.500z" fill="#c6d6ff" opacity=".82"/><text x="7.5" y="28.5" font-size="8.2" textLength="56.5" lengthAdjust="spacing" fill="#fff" opacity=".95">vite系统实战课!</text><text x="7.5" y="39.8" font-size="8.2" textLength="46.7" lengthAdjust="spacing" fill="#fff" opacity=".95">从入门到精通</text></svg></div><span style="left:640px">实战课程</span><span style="left:767px">初级</span><span style="left:894px">2021年7月22日</span><span style="left:1091px">11205</span><span style="left:1218px">86</span><span style="left:1368px">1100.00</span></div>
<div class="tr" style="top:247px"><i class="cb" style="left:10px;top:30px"></i><a style="left:41px">18</a><span style="left:99px">MySQL事务处理精选</span><div class="tm t3"><svg width="108" height="61" viewBox="0 0 108 61"><path d="M0 50C8 46 16 44 26 47S48 52 62 50 92 42 108 40V61H0z" fill="#fff" opacity=".1"/><path d="M0 55C12 50 26 52 40 55S78 58 108 50V61H0z" fill="#fff" opacity=".1"/><rect x="86" y="11" width="18" height="19" rx="1.500" fill="#fff" opacity=".22"/><rect x="86" y="11" width="18" height="3" rx="1.200" fill="#fff" opacity=".25"/><path d="M89 21h3M94 21h3M99 21h3M89 24.500h3M94 24.500h3" stroke="#2dbd7e" stroke-width="1" opacity=".5"/><rect x="79" y="26" width="6.300" height="20" rx="3" fill="#c9f0dc" opacity=".75"/><rect x="87" y="26" width="6.300" height="20" rx="1.800" fill="#c9f0dc" opacity=".75"/><rect x="95" y="26.500" width="6.300" height="19.500" rx="2.500" fill="#c9f0dc" opacity=".75" transform="rotate(-9 98 36)"/><path d="M81 34.500h2.400M81 37h2.400M81 39.500h2.400M89 37.500l1.200-1.700 1.200 1.700" stroke="#2dbd7e" stroke-width=".9" opacity=".8" fill="none"/><rect x="8.2" y="17" width="5.5" height="1" fill="#fff" opacity=".9"/><text x="8.2" y="27.6" font-size="8.2" textLength="53.7" lengthAdjust="spacing" fill="#fff" opacity=".95">Flask高级实战</text><text x="8.2" y="39" font-size="8.2" textLength="61.5" lengthAdjust="spacing" fill="#fff" opacity=".95">重塑Python本质</text></svg></div><span style="left:640px">实战课程</span><span style="left:767px">初级</span><span style="left:894px">2021年7月22日</span><span style="left:1091px">640</span><span style="left:1218px">65</span><span style="left:1368px">1000.00</span></div>
<div class="tr odd" style="top:324px"><i class="cb" style="left:10px;top:30px"></i><a style="left:41px">17</a><span style="left:99px">高性能MySQL调优</span><div class="tm t4"><svg width="108" height="61" viewBox="0 0 108 61"><circle cx="1" cy="56" r="12" fill="#fff" opacity=".1"/><path d="M74 61C79 47 94 40 108 41V61z" fill="#fff" opacity=".12"/><path d="M84 20c-1-5 3-9 8-9 6 0 10 3 9.500 8-.4 4-4 3.500-5 5.500-1 2-3 2.500-5.500 2-4-.8-6.500-3-7-6.500z" fill="#fff" opacity=".25"/><path d="M88 26L98.500 10" stroke="#fff" stroke-width="1.300" opacity=".45"/><rect x="77" y="27" width="16.200" height="24.200" rx=".8" fill="#fbd0d4" opacity=".9"/><rect x="79" y="28.600" width="12.200" height="1.300" fill="#f06a70" opacity=".8"/><rect x="79" y="31" width="12.200" height="14.600" fill="#fcd6d8"/><rect x="78.600" y="45.800" width="13" height="1.300" fill="#f06a70" opacity=".8"/><path d="M83.300 48.800l2.500-1.600v3.200z" fill="#f06a70"/><rect x="8.2" y="17" width="5.5" height="1" fill="#fff" opacity=".9"/><text x="8.2" y="27.6" font-size="8.2" textLength="49.6" lengthAdjust="spacing" fill="#fff" opacity=".95">移动端UI设计</text><text x="8.2" y="38.8" font-size="8.2" textLength="40.6" lengthAdjust="spacing" fill="#fff" opacity=".95">入门与实战</text></svg></div><span style="left:640px">实战课程</span><span style="left:767px">初级</span><span style="left:894px">2021年7月22日</span><span style="left:1091px">40</span><span style="left:1218px">300</span><span style="left:1368px">998.00</span></div>
<div class="tr" style="top:401px"><i class="cb" style="left:10px;top:30px"></i><a style="left:41px">16</a><span style="left:99px">ZooKeeper分布式架构搭建</span><div class="tm t5"><svg width="108" height="61" viewBox="0 0 108 61"><path d="M0 50C8 46 16 44 26 47S48 52 62 50 92 42 108 40V61H0z" fill="#fff" opacity=".1"/><path d="M0 55C12 50 26 52 40 55S78 58 108 50V61H0z" fill="#fff" opacity=".1"/><rect x="88" y="14" width="15" height="12" rx=".8" fill="#8fd0e0" opacity=".6"/><circle cx="95.800" cy="20" r="3.700" fill="#3a9a86" opacity=".65"/><circle cx="95" cy="19.300" r="1" fill="#8fd0e0" opacity=".7"/><path d="M78 33.500L90.500 27.300 103.300 33.500 90.500 39.700z" fill="#dcecff"/><path d="M82 37v7.500c3 3.200 14 3.200 17 0V37l-8.500 4.200z" fill="#cfeaf5"/><path d="M102.300 34v8" stroke="#dcecff" stroke-width="1.700"/><rect x="7.4" y="17.8" width="5.5" height="1" fill="#fff" opacity=".9"/><text x="7.5" y="29.8" font-size="8.2" textLength="66" lengthAdjust="spacing" fill="#fff" opacity=".95">Django+xadmin</text><text x="7.5" y="40.4" font-size="8.2" textLength="65.5" lengthAdjust="spacing" fill="#fff" opacity=".95">开发在线教育网站</text></svg></div><span style="left:640px">实战课程</span><span style="left:767px">初级</span><span style="left:894px">2021年7月22日</span><span style="left:1091px">90</span><span style="left:1218px">88</span><span style="left:1368px">40.00</span></div>
<div class="tr odd" style="top:478px"><i class="cb" style="left:10px;top:30px"></i><a style="left:41px">15</a><span style="left:99px">TensorFlow基础</span><div class="tm t6"><svg width="108" height="61" viewBox="0 0 108 61"><circle cx="103" cy="-8" r="33" fill="none" stroke="#fff" stroke-width="11" opacity=".13"/><circle cx="16" cy="76" r="25" fill="none" stroke="#fff" stroke-width="9" opacity=".13"/><path d="M84 15a2 2 0 0 1 2-2h9l8 6.500v5H84z" fill="#fff" opacity=".3"/><circle cx="93.500" cy="20" r="3" fill="#7ea0ff" opacity=".35"/><path d="M71 25.500a1.500 1.500 0 0 1 1.500-1.500h6.800l2 2h15.200a1.500 1.500 0 0 1 1.500 1.500v16a1.500 1.500 0 0 1-1.500 1.500h-24a1.500 1.500 0 0 1-1.500-1.500z" fill="#cfdfff" opacity=".95"/><path d="M79 36c0-2.500 2-3.500 3.500-3.500V31.500c0-1 4.500-1 4.500 0V33c2 0 3.300 1 3.300 3s-1.300 3-3 3v1.300c0 1-4.500 1-4.500 0V39c-2 0-3.800-.8-3.800-3z" fill="#a9c2ff"/><rect x="8.2" y="17.8" width="5.5" height="1" fill="#fff" opacity=".9"/><text x="8.2" y="29.5" font-size="8.2" textLength="52.4" lengthAdjust="spacing" fill="#fff" opacity=".95">Python Flask</text><text x="8.2" y="40.6" font-size="8.2" textLength="57.8" lengthAdjust="spacing" fill="#fff" opacity=".95">快速入门与进阶</text></svg></div><span style="left:640px">实战课程</span><span style="left:767px">初级</span><span style="left:894px">2021年7月22日</span><span style="left:1091px">670</span><span style="left:1218px">220</span><span style="left:1368px">1590.00</span></div>
<div class="tr" style="top:555px"><i class="cb" style="left:10px;top:30px"></i><a style="left:41px">14</a><span style="left:99px">RabbitMQ精讲</span><div class="tm t7"><svg width="108" height="61" viewBox="0 0 108 61"><circle cx="103" cy="-8" r="33" fill="none" stroke="#fff" stroke-width="11" opacity=".12"/><circle cx="18" cy="76" r="26" fill="none" stroke="#fff" stroke-width="9" opacity=".12"/><path d="M86 21.500l9.500-4 9.500 4-9.500 4.500zM86 17l9.500-4.500 9.500 4.500-9.500 4.500z" fill="#fff" opacity=".3"/><path d="M87.500 24l8 4 8-4v2.500l-8 4-8-4z" fill="#fff" opacity=".22"/><path d="M75 25.500a1.500 1.500 0 0 1 1.500-1.500h17a1.500 1.500 0 0 1 1.500 1.500V46.800H75z" fill="#e2dcff"/><path d="M80 34c0-3 2.300-5 5.200-5s5.300 2 5.300 5c0 2-1.300 2.600-2.800 2.800v1.500c0 1.400-7 1.400-7.500-1z" fill="#8763f0"/><path d="M85.500 30c2 0 3 1.500 3 3.500" stroke="#e2dcff" stroke-width="1.300" fill="none"/><circle cx="93.600" cy="44.600" r="4.600" fill="#e2dcff" stroke="#8258ee" stroke-width="1"/><path d="M96 44.600h-4.500m1.800-1.800l-1.800 1.800 1.800 1.800" stroke="#8258ee" stroke-width="1" fill="none"/><rect x="8.3" y="18" width="5.5" height="1" fill="#fff" opacity=".9"/><text x="8.3" y="29.5" font-size="8.2" textLength="44.6" lengthAdjust="spacing" fill="#fff" opacity=".95">Go+Python</text><text x="8.3" y="40.6" font-size="8.2" textLength="58.2" lengthAdjust="spacing" fill="#fff" opacity=".95">双语言混合开发</text></svg></div><span style="left:640px">实战课程</span><span style="left:767px">初级</span><span style="left:894px">2021年7月22日</span><span style="left:1091px">980</span><span style="left:1218px">100</span><span style="left:1368px">710.00</span></div>
<div class="tr sel" style="top:632px"><i class="cb" style="left:10px;top:30px"></i><a style="left:41px">13</a><span style="left:99px">Go容器化微服务系统实战</span><div class="tm t8"><svg width="108" height="61" viewBox="0 0 108 61"><path d="M90.500 15.500c0-1.500 6-1.500 6 0v3.500h-4c-2 0-3.500 1.500-3.500 3.500v3.500h-2c-2 0-2-7 0-7h3.500z M96.500 19h2c2.500 0 2.500 7.500 0 7.500h-3.500V30c0 1.500-6 1.500-6 0v-3.500" fill="#fff" opacity=".45"/><circle cx="92" cy="16.300" r=".7" fill="#00b4e0"/><rect x="8.3" y="18" width="5.5" height="1" fill="#fff" opacity=".9"/><text x="8.3" y="29.3" font-size="8.2" textLength="41.7" lengthAdjust="spacing" fill="#fff" opacity=".95">Python进阶</text><text x="8.3" y="40.6" font-size="8.2" textLength="49.5" lengthAdjust="spacing" fill="#fff" opacity=".95">高级编程实战</text></svg></div><span style="left:640px">实战课程</span><span style="left:767px">初级</span><span style="left:894px">2021年7月22日</span><span style="left:1091px">34000</span><span style="left:1218px">65</span><span style="left:1368px">300.00</span></div>
</div>
<div id="wm"><div class="w1">激活 <em>Windows</em></div><div class="w2">转到“设置”以激活 Windows。</div></div>
</body>
</html>
